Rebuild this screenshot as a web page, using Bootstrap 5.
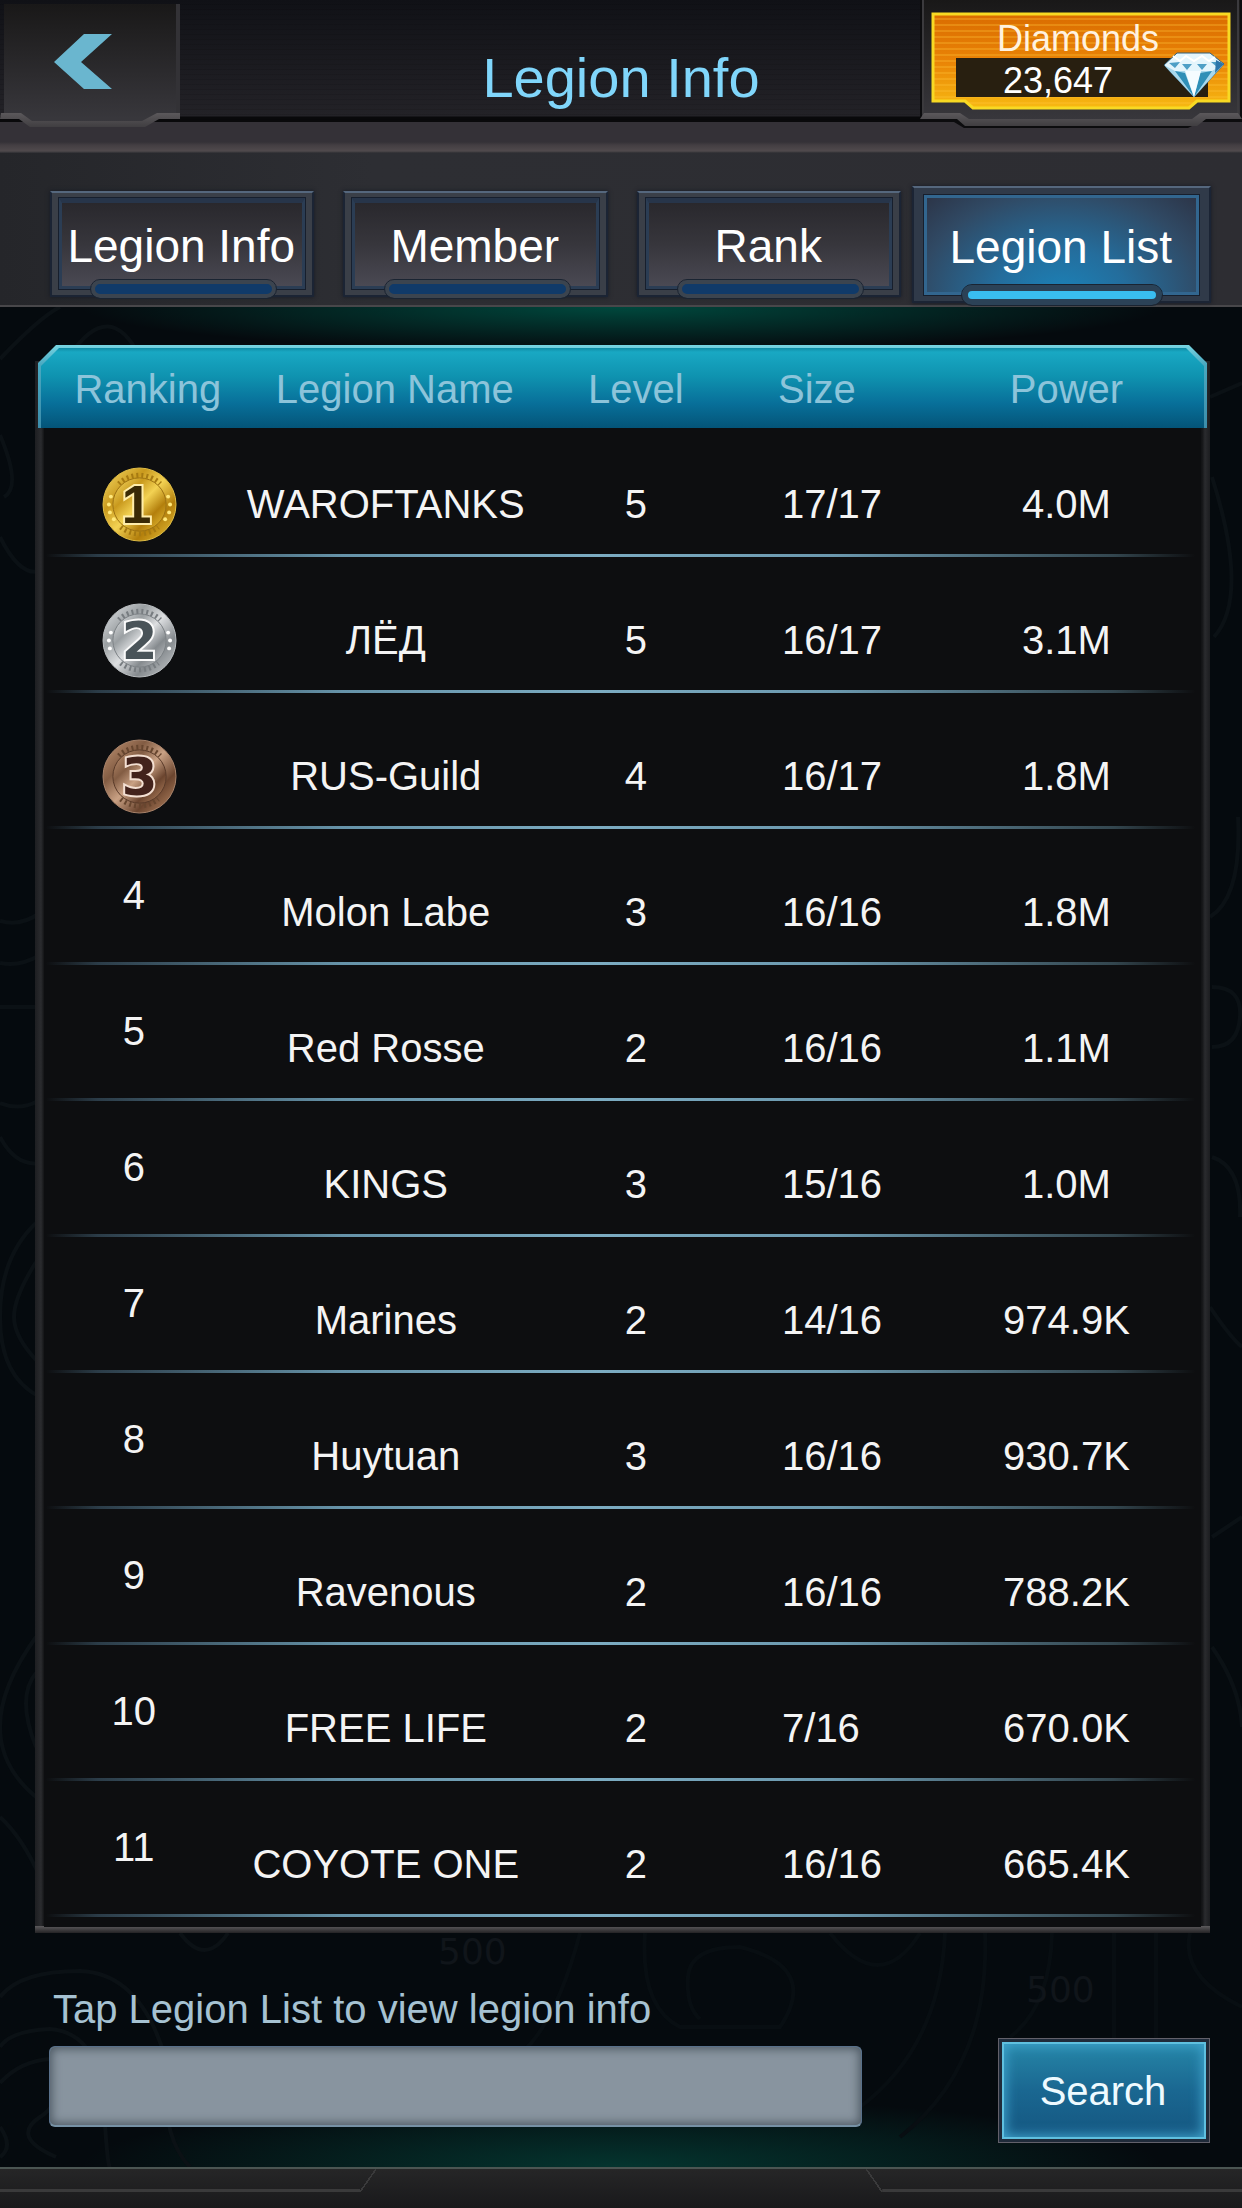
<!DOCTYPE html>
<html lang="en" data-bs-theme="dark">
<head>
<meta charset="utf-8">
<meta name="viewport" content="width=device-width, initial-scale=1">
<title>Legion Info</title>
<link rel="stylesheet" href="https://cdn.jsdelivr.net/npm/bootstrap@5.3.0/dist/css/bootstrap.min.css">
<style>
body{font-family:"Liberation Sans",Arial,sans-serif;font-size:40px;line-height:48px;color:#f4f4f4;background:#050a0e}
/* top bar */
.topbar{display:grid;grid-template-columns:1fr auto 1fr;height:122px;background:repeating-linear-gradient(#0000 0 4px,#00000018 4px 5px),linear-gradient(#101116,#232227 116px,#09090b 117px);z-index:2}
.topbar h1{font-size:56px;line-height:64px;color:#80d6fb;margin:46px 0 0;font-weight:400}
.back-link{width:181px;height:130px}
.gem-box{width:322px;height:130px;justify-self:end;font-size:36px;line-height:42px;color:#fff2df}
.art{position:absolute;inset:0;width:100%;height:100%}
.gem-label{padding:18px 6px 0 0}
.gem-count{padding:0 46px 0 0;color:#fff}
.ridge{height:31px;background:linear-gradient(#343137 0 20px,#433e42 23px,#504a4d 29px,#2d2d32)}
/* tabs */
.tabzone{background:linear-gradient(90deg,#25262a,#2d2e33 30%,#2d2d32);border-bottom:2px solid #48474a;padding:33px 31px 0 50px;height:154px}
.tabgrid{display:grid;grid-template-columns:33fr 33fr 33fr 35fr;column-gap:29px;align-items:start}
.gametab{height:106px;margin-top:5px;padding:4px 2px 0 0;border:2px solid #1b2434;border-top-color:#55677d;background:#3a3f48;color:#fff;font-size:46px;line-height:90px;white-space:nowrap;text-align:center;box-shadow:0 0 4px #151a25;position:relative;z-index:0}
.gametab::before{content:"";position:absolute;inset:5px 7px 6px;z-index:-1;border:3px solid #2b3d54;border-top:5px solid #27354a;outline:1px solid #171f2d;background:linear-gradient(#29282d,#37363c 50%,#4a4953)}
.gametab::after{content:"";position:absolute;left:15%;right:14%;bottom:-3px;height:18px;border:4px solid #3b444f;border-radius:9px;background:#103a69;outline:1px solid #1a2432;z-index:-1}
.gametab.active{height:117px;margin:0 0 0 -18px;padding:4px 2px 0 0;background:#303a49}
.gametab.active::before{inset:7px 10px 6px;border:3px solid #32668f;background:radial-gradient(ellipse at 50% 105%,#1b82b8 0,#246d9c 35%,#304a65 75%,#2b2d3d 110%)}
.gametab.active::after{left:16%;right:16%;bottom:-4px;height:20px;border:6px solid #2b4257;background:#39bdf0;border-radius:10px}
/* stage */
.stage{position:relative;padding:38px 32px 0 35px;background:radial-gradient(ellipse 540px 44px at 50% 0,#00483d,#00483d00),radial-gradient(ellipse 540px 70px at 50% 100%,#04352f,#04352f00),#050a0e}
.contours{position:absolute;inset:0;width:100%;height:100%}
.listpanel{position:relative;padding:0 3px 16px;background:
 linear-gradient(#0d0e10,#0d0e10) 9px 16px/calc(100% - 18px) calc(100% - 22px) no-repeat,
 linear-gradient(#5c5a5c,#242325) 0 100%/100% 7px no-repeat,
 linear-gradient(90deg,#1d1e21,#2a2b2e 6px,#131416 9px,#131416 calc(100% - 8px),#2a2b2e calc(100% - 5px),#1c1d20) 0 16px/100% calc(100% - 16px) no-repeat}
.listpanel::before,.listpanel::after{content:"";position:absolute;left:3px;right:3px;top:0;height:83px;background:linear-gradient(#77d5e2,#49a8c0 20px,#3c8dab);clip-path:polygon(18px 0,calc(100% - 18px) 0,100% 18px,100% 100%,0 100%,0 18px)}
.listpanel::after{left:6px;right:6px;top:3px;height:80px;background:linear-gradient(#108ba4,#19a8c3 4px,#0f93b0 28px,#08709a 55px,#045478)}
.legions{position:relative;z-index:1;table-layout:fixed;margin:0;--bs-table-bg:transparent;color:#f4f4f4}
.legions>:not(caption)>*>*{border:0;padding:0;vertical-align:bottom;text-align:center;background:none;box-shadow:none;color:inherit}
.legions thead tr{height:83px;color:#8cc4da}
.legions>thead>tr>th{font-weight:400;padding-bottom:15px}
.legions>thead>tr>th:nth-child(1){padding-left:28px}
.legions>thead>tr>th:nth-child(2){padding-left:18px}
.legions tbody tr{height:136px;background:linear-gradient(90deg,#0000 8px,#2b3c48 60px,#6693a9 26%,#7cacc2 48%,#6b98ae 68%,#33464f 92%,#0000 99%) 0 100%/100% 3px no-repeat}
.legions tbody tr:first-child{height:129px}
.legions>tbody>tr>td{padding-bottom:29px}
.legions>tbody>tr>td:nth-child(1){padding-bottom:46px}
.legions>tbody>tr>td.medalcell{padding:0 0 15px 12px}
.legions>*>tr>:nth-child(4){text-align:left;padding-left:52px}
.legions>thead>tr>th:nth-child(4){padding-left:48px}
.legions>*>tr>:nth-child(5){padding-right:4px}
.medalcell svg{display:block;margin:auto;width:75px;height:75px}
/* search */
.searchform{position:relative;margin:52px 0 0;padding:0 0 24px 14px}
.searchfield{width:70%}
.searchfield label{color:#a6c2d2;display:block;padding-left:4px}
.searchfield input{height:81px;margin:13px 0 16px;border:1px solid #58708a;border-bottom:2px solid #7691a5;border-radius:6px;background:#88949f;color:#10161c;font-size:40px;box-shadow:inset 0 0 10px 2px #4e5a64}
.searchfield input:focus{background:#95a1ac;color:#10161c;box-shadow:inset 0 0 10px 2px #2a6f93}
.go-btn{width:212px;height:105px;padding:0 2px 0 0;border-radius:0;border:1px solid #62606a;color:#eefaff;font-size:40px;background:linear-gradient(#2789aa,#1a6791 50%,#14557f);box-shadow:inset 0 0 0 3px #202b3a,inset 0 0 0 5px #5fc0df,inset 0 0 12px 7px #3fa2cb}
.go-btn:hover{color:#fff}
.footbar{height:41px;background:linear-gradient(#262627,#19191b);border-top:2px solid #4b5552;display:flex;justify-content:space-between}
.footbar i{height:23px;width:29%;border-bottom:3px solid #3a3a3b;position:relative}
.footbar i::after{content:"";position:absolute;left:100%;top:0;width:16px;height:23px;background:linear-gradient(to bottom right,#0000 47%,#3a3a3b 47% 53%,#0000 53%)}
.footbar i:last-child{transform:scaleX(-1)}
</style>
<script src="https://cdn.jsdelivr.net/npm/bootstrap@5.3.0/dist/js/bootstrap.bundle.min.js"></script>
</head>
<body class="d-flex flex-column min-vh-100">
<svg width="0" height="0" class="position-absolute" aria-hidden="true">
 <defs>
  <linearGradient id="tile" x2="0" y2="1"><stop stop-color="#191818"/><stop offset="1" stop-color="#39383d"/></linearGradient>
  <linearGradient id="lip" x2="0" y2="1"><stop stop-color="#5b585b"/><stop offset="1" stop-color="#403e41"/></linearGradient>
  <linearGradient id="gold" x2="0" y2="1"><stop stop-color="#da6c00"/><stop offset=".5" stop-color="#e98306"/><stop offset="1" stop-color="#f7b912"/></linearGradient>
  <pattern id="scan" width="6" height="6" patternUnits="userSpaceOnUse"><path d="M0 1h6" stroke="#ffc43a" stroke-opacity=".3" stroke-width="2"/></pattern>
  <linearGradient id="au" x2="1" y2="1"><stop stop-color="#f9df6b"/><stop offset=".3" stop-color="#c9991d"/><stop offset=".5" stop-color="#f3d253"/><stop offset=".72" stop-color="#b37f0c"/><stop offset="1" stop-color="#efc93e"/></linearGradient>
  <linearGradient id="ag" x2="1" y2="1"><stop stop-color="#e6e8ea"/><stop offset=".3" stop-color="#9a9fa2"/><stop offset=".5" stop-color="#dddfe1"/><stop offset=".72" stop-color="#858a8e"/><stop offset="1" stop-color="#d0d3d5"/></linearGradient>
  <linearGradient id="cu" x2="1" y2="1"><stop stop-color="#c59877"/><stop offset=".3" stop-color="#825c43"/><stop offset=".5" stop-color="#c9a184"/><stop offset=".72" stop-color="#6b452f"/><stop offset="1" stop-color="#c18f69"/></linearGradient>
 </defs>
</svg>

<header class="topbar position-relative">
 <a href="#" class="back-link position-relative" aria-label="Back">
  <svg class="art" viewBox="0 0 181 130" aria-hidden="true">
   <path d="M4 4H176V116H157L143 122H31L20 116H4Z" fill="url(#tile)"/>
   <path d="M176 4h4v112h-4z" fill="#333236"/>
   <path d="M1 113H21L32 121H142L157 113H180V119H159L145 127H30L19 119H0Z" fill="url(#lip)"/>
   <path d="M84 34h28L81 62l31 27H84L54 62Z" fill="#6ab6cf"/>
  </svg>
 </a>
 <h1>Legion Info</h1>
 <div class="gem-box position-relative">
  <svg class="art" viewBox="0 0 322 130" aria-hidden="true">
   <path d="M0 0H322V122H280L268 128H44L34 122H0Z" fill="#0c0c0e"/>
   <path d="M2 0H320V116H286L272 124H46L36 116H2Z" fill="url(#tile)"/>
   <path d="M2 0h2v114H2zM317 0h2v114h-2z" fill="#3b3a3d"/>
   <path d="M4 113H40L49 119H272L280 113H318L322 119H286L277 126H45L37 119H0Z" fill="url(#lip)"/>
   <path d="M13 14H309V101H277L269 108H53L45 101H13Z" fill="url(#gold)"/>
   <path d="M13 14H309V101H277L269 108H53L45 101H13Z" fill="url(#scan)" stroke="#f8d923" stroke-width="3"/>
   <path d="M36 58H288V97H36Z" fill="#281f10"/>
   <path d="M257 53H290L304 64L274 97L244 65Z" fill="#e4f5fc" stroke="#315f78" stroke-width="1"/>
   <path d="M244 65L255 71H292L304 64L274 97Z" fill="#a8d8ec"/>
   <path d="M255 71L265 73 274 97ZM280 73L292 71 274 97Z" fill="#2f8fb7"/>
   <path d="M265 71L274 97 281 71Z" fill="#f5fcff"/>
   <path d="M249 63l6 5 5-6zM262 64l5 6 5-6zM277 64l5 6 5-6zM291 62l6 5 5-5z" fill="#4e9fc6"/>
   <path d="M253 56l7 5 6-5 8 5 8-5 7 5 6-4" fill="none" stroke="#fff" stroke-width="2"/>
   <path d="M296 60l8 4-9 9z" fill="#2c76aa"/>
  </svg>
  <div class="gem-label position-relative text-center">Diamonds</div>
  <div class="gem-count position-relative text-center">23,647</div>
 </div>
</header>
<div class="ridge"></div>

<nav class="tabzone" aria-label="Legion sections">
 <div class="tabgrid">
  <button type="button" class="gametab">Legion Info</button>
  <button type="button" class="gametab">Member</button>
  <button type="button" class="gametab">Rank</button>
  <button type="button" class="gametab active" aria-current="page">Legion List</button>
 </div>
</nav>

<main class="stage flex-grow-1">
 <svg class="contours" viewBox="0 0 1242 1860" preserveAspectRatio="none" fill="none" stroke="#0b1115" stroke-width="4" aria-hidden="true">
  <path d="M0 52Q40 10 60 0M70 48Q110 -10 140 50M0 128Q22 180 4 190M0 230Q20 270 40 264M0 614Q20 620 40 606M0 656Q20 660 40 648M0 700h38M0 796Q20 804 38 794M0 830Q16 860 40 856M36 916Q0 950 0 1010T40 1090M36 955Q14 990 14 1010T38 1055M36 1330Q0 1380 0 1420T36 1490M36 1366Q16 1390 36 1440M0 1510Q22 1530 40 1570"/>
  <path d="M1210 90L1242 76M1212 170Q1250 290 1214 330M1210 610Q1242 590 1238 510M1212 680Q1242 680 1240 710T1212 740M1212 850Q1242 860 1240 910M1210 1000Q1230 1030 1242 1040M1212 1230L1242 1210M1212 1340Q1240 1380 1242 1420"/>
  <path d="M180 1626Q205 1660 228 1626M0 1690Q20 1664 80 1664Q140 1666 165 1750Q160 1830 190 1860M0 1740Q10 1724 50 1722Q100 1726 104 1800T112 1860M0 1776Q20 1754 50 1752Q70 1790 40 1810T56 1850M0 1820Q14 1840 0 1850"/>
  <path stroke="#080e12" d="M580 1626Q550 1740 500 1760M645 1626Q640 1700 680 1720H780Q820 1660 740 1640Q690 1640 688 1670T700 1712M830 1626Q880 1690 920 1626M945 1626Q940 1740 860 1800M985 1626Q990 1760 900 1830M1052 1626Q1050 1700 1010 1730M1114 1626v120M1156 1626v180M1190 1626Q1180 1670 1242 1700"/>
  <g fill="#10151a" stroke="none" font-size="36" font-family="DejaVu Sans"><text x="438" y="1657">500</text><text x="1026" y="1695">500</text></g>
 </svg>
 <section class="listpanel">
  <table class="table legions">
   <colgroup><col style="width:16.4%"><col style="width:26.7%"><col style="width:16.1%"><col style="width:17.1%"><col style="width:23.7%"></colgroup>
   <thead><tr><th scope="col">Ranking</th><th scope="col">Legion Name</th><th scope="col">Level</th><th scope="col">Size</th><th scope="col">Power</th></tr></thead>
   <tbody>
    <tr><td class="medalcell"><svg viewBox="0 0 76 76"><circle cx="38" cy="38" r="37" fill="url(#au)" stroke="#e0bd45" stroke-width="1"/><circle cx="38" cy="38" r="27" fill="url(#au)" stroke="#9b7112"/><path d="M17 17A30 30 0 0 1 59 17M19 61A30 30 0 0 0 57 61" fill="none" stroke="#a67a12" stroke-width="5" stroke-dasharray="2 3"/><g fill="#ffe87b"><circle cx="9" cy="30" r="2"/><circle cx="7" cy="38" r="2"/><circle cx="8" cy="46" r="2"/><circle cx="12" cy="53" r="2"/><circle cx="67" cy="30" r="2"/><circle cx="69" cy="38" r="2"/><circle cx="68" cy="46" r="2"/><circle cx="64" cy="53" r="2"/></g><text x="35" y="57" text-anchor="middle" font-size="54" font-weight="700" fill="#3a2a05" stroke="#ffedaa" stroke-width="4" paint-order="stroke">1</text></svg></td><td>WAROFTANKS</td><td>5</td><td>17/17</td><td>4.0M</td></tr>
    <tr><td class="medalcell"><svg viewBox="0 0 76 76"><circle cx="38" cy="38" r="37" fill="url(#ag)" stroke="#b9bdc0" stroke-width="1"/><circle cx="38" cy="38" r="27" fill="url(#ag)" stroke="#7b8084"/><path d="M17 17A30 30 0 0 1 59 17M19 61A30 30 0 0 0 57 61" fill="none" stroke="#777c80" stroke-width="5" stroke-dasharray="2 3"/><g fill="#fff"><circle cx="9" cy="30" r="2"/><circle cx="7" cy="38" r="2"/><circle cx="8" cy="46" r="2"/><circle cx="67" cy="30" r="2"/><circle cx="69" cy="38" r="2"/><circle cx="68" cy="46" r="2"/></g><text x="38" y="57" text-anchor="middle" font-size="52" font-family="DejaVu Sans" font-weight="700" fill="#4a5459" stroke="#fafafa" stroke-width="4" paint-order="stroke">2</text></svg></td><td>ЛЁД</td><td>5</td><td>16/17</td><td>3.1M</td></tr>
    <tr><td class="medalcell"><svg viewBox="0 0 76 76"><circle cx="38" cy="38" r="37" fill="url(#cu)" stroke="#a9836b" stroke-width="1"/><circle cx="38" cy="38" r="27" fill="url(#cu)" stroke="#583a29"/><path d="M17 17A30 30 0 0 1 59 17M19 61A30 30 0 0 0 57 61" fill="none" stroke="#67462f" stroke-width="5" stroke-dasharray="2 3"/><text x="38" y="57" text-anchor="middle" font-size="52" font-family="DejaVu Sans" font-weight="700" fill="#43231c" stroke="#f3dfd2" stroke-width="4" paint-order="stroke">3</text></svg></td><td>RUS-Guild</td><td>4</td><td>16/17</td><td>1.8M</td></tr>
    <tr><td>4</td><td>Molon Labe</td><td>3</td><td>16/16</td><td>1.8M</td></tr>
    <tr><td>5</td><td>Red Rosse</td><td>2</td><td>16/16</td><td>1.1M</td></tr>
    <tr><td>6</td><td>KINGS</td><td>3</td><td>15/16</td><td>1.0M</td></tr>
    <tr><td>7</td><td>Marines</td><td>2</td><td>14/16</td><td>974.9K</td></tr>
    <tr><td>8</td><td>Huytuan</td><td>3</td><td>16/16</td><td>930.7K</td></tr>
    <tr><td>9</td><td>Ravenous</td><td>2</td><td>16/16</td><td>788.2K</td></tr>
    <tr><td>10</td><td>FREE LIFE</td><td>2</td><td>7/16</td><td>670.0K</td></tr>
    <tr><td>11</td><td>COYOTE ONE</td><td>2</td><td>16/16</td><td>665.4K</td></tr>
   </tbody>
  </table>
 </section>
 <form class="searchform d-flex justify-content-between align-items-end">
  <div class="searchfield">
   <label for="q">Tap Legion List to view legion info</label>
   <input id="q" type="text" class="form-control">
  </div>
  <button type="button" class="btn go-btn">Search</button>
 </form>
</main>
<footer class="footbar"><i></i><i></i></footer>
</body>
</html>
